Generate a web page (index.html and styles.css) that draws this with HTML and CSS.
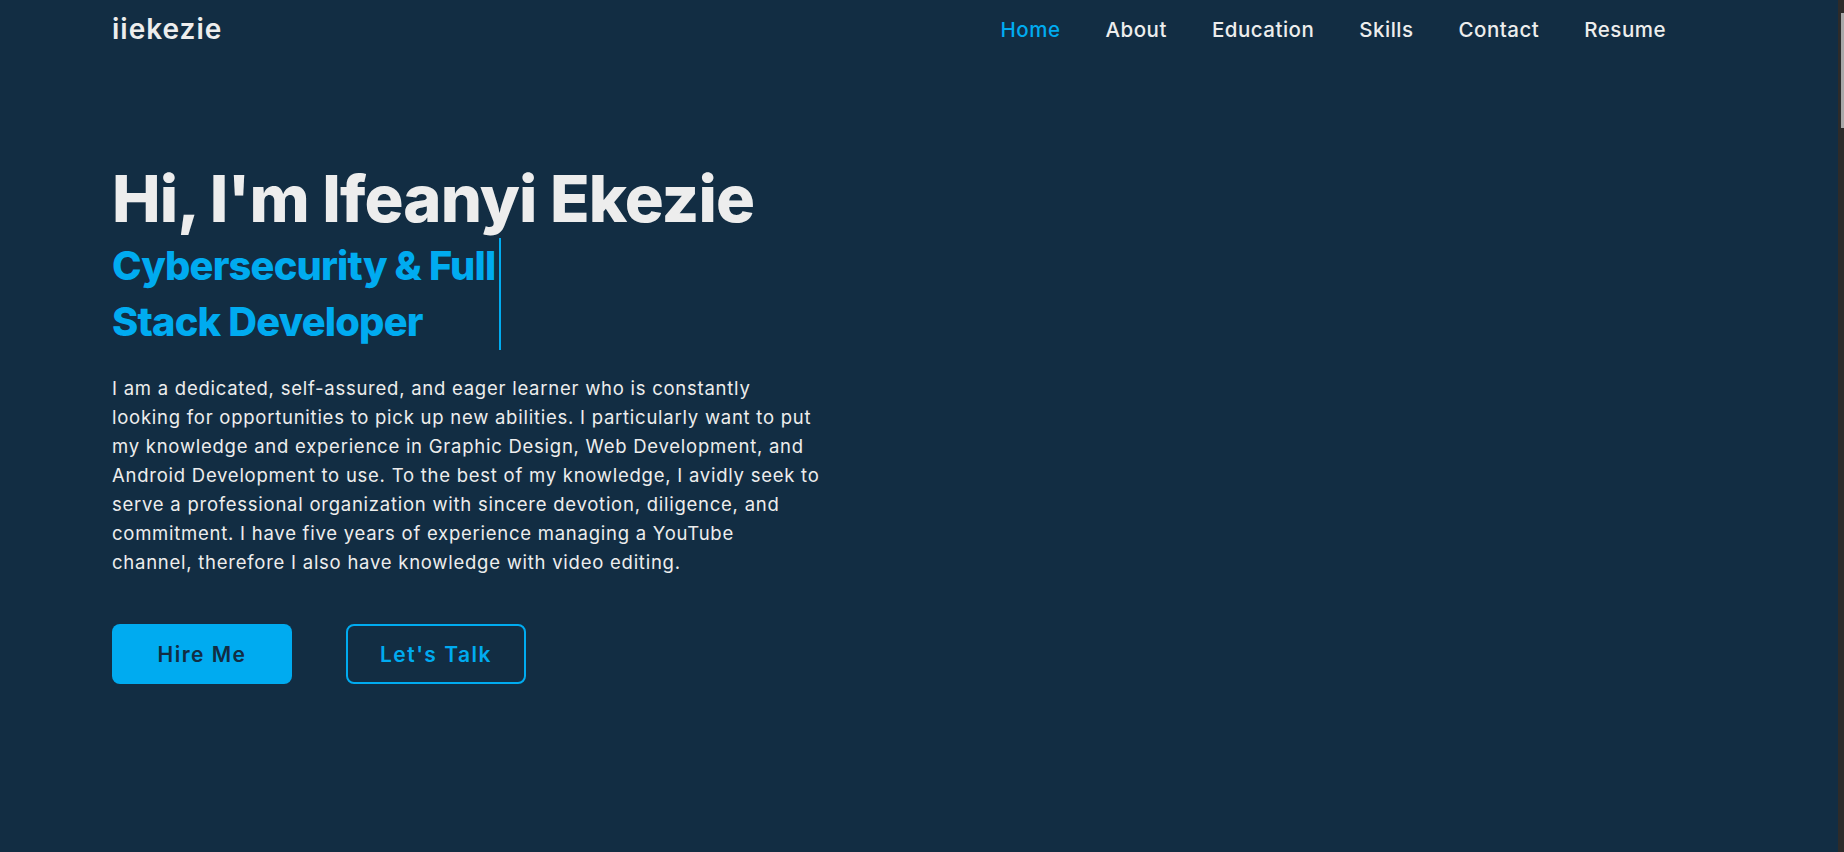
FILE: index.html
```html
<!DOCTYPE html>
<html lang="en">
<head>
<meta charset="utf-8">
<title>iiekezie</title>
<link rel="stylesheet" href="styles.css">
</head>
<body>
<header class="header">
  <a class="logo" href="#">iiekezie</a>
  <nav class="nav">
    <a class="nav-link active" href="#">Home</a>
    <a class="nav-link" href="#">About</a>
    <a class="nav-link" href="#">Education</a>
    <a class="nav-link" href="#">Skills</a>
    <a class="nav-link" href="#">Contact</a>
    <a class="nav-link" href="#">Resume</a>
  </nav>
</header>
<main class="home">
  <div class="home-content">
    <h1 class="title">Hi, I'm Ifeanyi Ekezie</h1>
    <div class="typing-wrap"><span class="typing">Cybersecurity &amp; Full Stack Developer</span></div>
    <p class="intro">I am a dedicated, self-assured, and eager learner who is constantly<br>
looking for opportunities to pick up new abilities. I particularly want to put<br>
my knowledge and experience in Graphic Design, Web Development, and<br>
Android Development to use. To the best of my knowledge, I avidly seek to<br>
serve a professional organization with sincere devotion, diligence, and<br>
commitment. I have five years of experience managing a YouTube<br>
channel, therefore I also have knowledge with video editing.</p>
    <div class="buttons">
      <a class="btn btn-fill" href="#">Hire Me</a>
      <a class="btn btn-outline" href="#">Let's Talk</a>
    </div>
  </div>
</main>
<div class="scrollbar"><div class="scroll-thumb"></div></div>
</body>
</html>
```
FILE: styles.css
```css
* {
  margin: 0;
  padding: 0;
  box-sizing: border-box;
}

html, body {
  height: 100%;
}

body {
  background: #122d43;
  color: #ededed;
  font-family: "Inter", "Open Sans", sans-serif;
  overflow: hidden;
}

a {
  text-decoration: none;
}

.header {
  display: flex;
  align-items: center;
  justify-content: space-between;
  height: 58px;
  padding: 0 178px 0 112px;
}

.logo {
  color: #ededed;
  font-size: 28px;
  font-weight: 600;
  letter-spacing: 1px;
}

.nav {
  display: flex;
  gap: 45px;
}

.nav-link {
  color: #ededed;
  font-size: 20.5px;
  font-weight: 500;
  letter-spacing: 0.5px;
}

.nav-link.active {
  color: #00abf0;
}

.home {
  padding: 102px 112px 0;
}

.title {
  font-size: 65px;
  font-weight: 800;
  line-height: 1.2;
  letter-spacing: -0.9px;
  color: #ededed;
}

.typing-wrap {
  width: 400px;
}

.typing {
  display: inline-block;
  max-width: 389px;
  padding-right: 2px;
  border-right: 2px solid #00abf0;
  color: #00abf0;
  font-size: 39.8px;
  font-weight: 800;
  line-height: 56px;
  letter-spacing: -0.8px;
}

.intro {
  width: 760px;
  margin-top: 24px;
  font-size: 18.5px;
  line-height: 29px;
  letter-spacing: 0.75px;
  color: #ededed;
}

.buttons {
  display: flex;
  gap: 54px;
  margin-top: 47px;
}

.btn {
  display: flex;
  align-items: center;
  justify-content: center;
  width: 180px;
  height: 60px;
  border-radius: 8px;
  font-size: 21px;
  font-weight: 600;
  letter-spacing: 1.5px;
}

.btn-fill {
  background: #00abf0;
  color: #122d43;
}

.btn-outline {
  border: 2px solid #00abf0;
  color: #00abf0;
}

.scrollbar {
  position: fixed;
  top: 0;
  right: 0;
  width: 6px;
  height: 100%;
  background: #2d2b2a;
}

.scroll-thumb {
  margin: 13px 0 0 3px;
  width: 3px;
  height: 115px;
  background: #a8a8a8;
}
```
